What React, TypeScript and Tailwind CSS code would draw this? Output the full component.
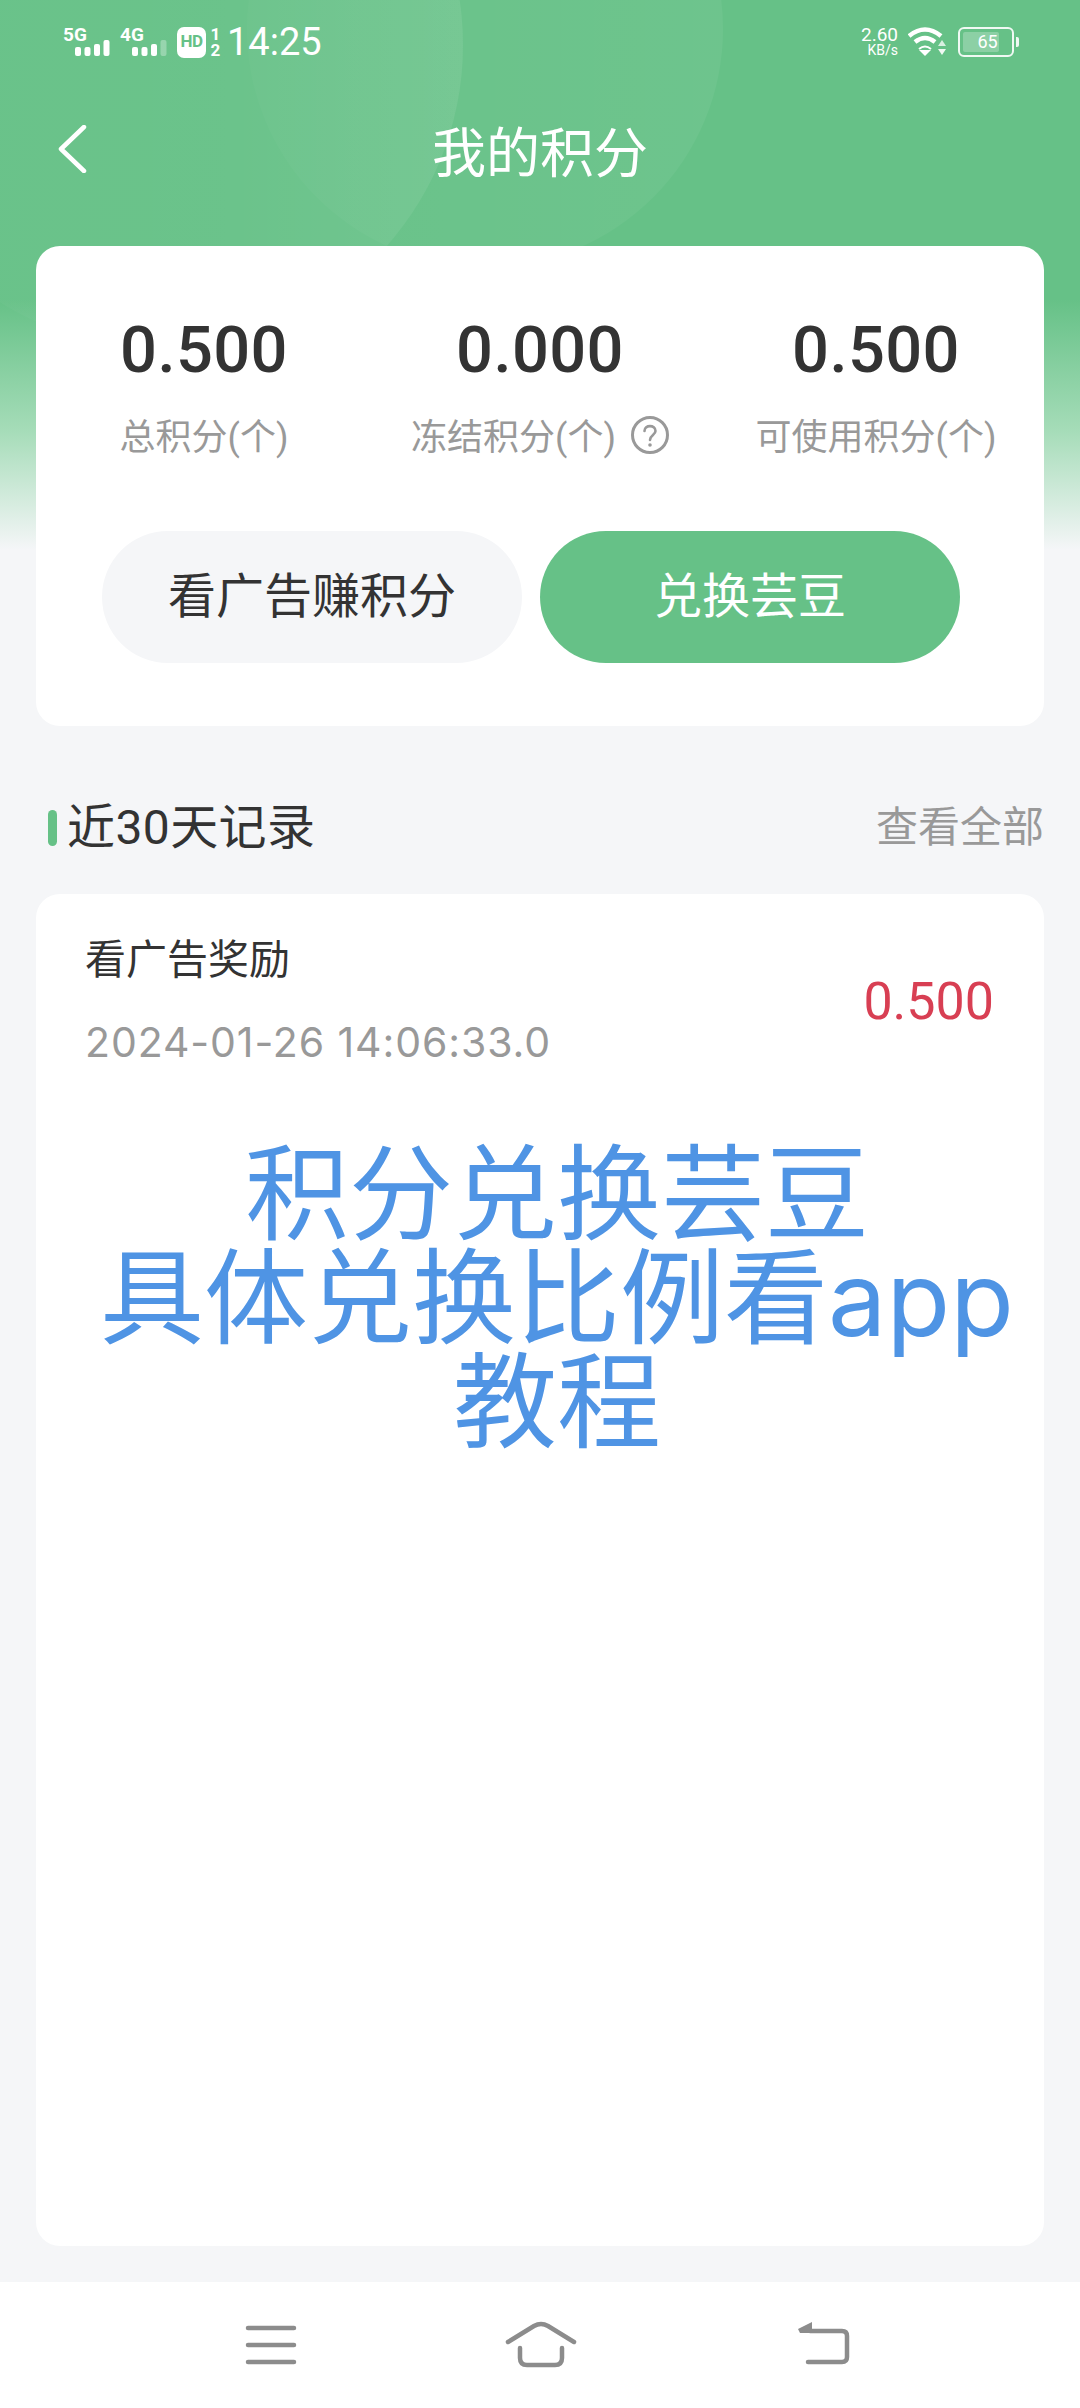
const CJK = "font-['Roboto','Noto_Sans_CJK_SC',sans-serif]";
const INTER = "font-['Inter','Noto_Sans_CJK_SC',sans-serif]";

function Bars({ faded }: { faded?: boolean }) {
  return (
    <svg width="36" height="17" viewBox="0 0 36 17" className="mt-[-2px]">
      <rect x="0" y="7" width="6" height="9" rx="2" fill="#fff" />
      <rect x="9.5" y="7" width="6" height="9" rx="2" fill="#fff" />
      <rect x="19" y="4" width="6" height="12" rx="2" fill="#fff" />
      <rect x="28.5" y="0" width="6" height="16" rx="2" fill="#fff" opacity={faded ? 0.3 : 1} />
    </svg>
  );
}

function Signal({ label, faded }: { label: string; faded?: boolean }) {
  return (
    <div className="flex flex-col w-[48px]">
      <span className="text-[19px] leading-[15px] font-bold text-white">{label}</span>
      <div className="ml-[12px]">
        <Bars faded={faded} />
      </div>
    </div>
  );
}

function StatusBar() {
  return (
    <div className="flex items-center justify-between h-[84px] pl-[63px] pr-[60px] text-white">
      <div className="flex items-center">
        <Signal label="5G" />
        <div className="w-[9px]" />
        <Signal label="4G" faded />
        <div className="ml-[9px] w-[29px] h-[31px] rounded-[7px] bg-white flex items-center justify-center text-[17px] font-bold text-[#66c187] tracking-[-0.5px]">
          HD
        </div>
        <div className="ml-[4px] flex flex-col items-center w-[11px] text-[17px] leading-[16px] font-bold">
          <span>1</span>
          <span>2</span>
        </div>
        <span className="ml-[6px] text-[38px] leading-[40px]">14:25</span>
      </div>
      <div className="flex items-center mr-[6px]">
        <div className="flex flex-col items-end mr-[10px] w-[40px]">
          <span className="text-[19px] leading-[16px]">2.60</span>
          <span className="text-[14px] leading-[14px]">KB/s</span>
        </div>
        <svg width="40" height="30" viewBox="0 0 40 30">
          <path d="M1 9 Q17 -4 33 9" fill="none" stroke="#fff" strokeWidth="4.5" />
          <path d="M7 15 Q17 7 27 15" fill="none" stroke="#fff" strokeWidth="4.5" />
          <path d="M11 23 L23 23 L17 29 Z" fill="#fff" />
          <path d="M11 22 Q17 17 23 22" fill="none" stroke="#fff" strokeWidth="2" />
          <path d="M30 19 L38 19 L34 13 Z" fill="#fff" opacity="0.75" />
          <path d="M30 22 L38 22 L34 28 Z" fill="#fff" opacity="0.9" />
        </svg>
        <div className="relative ml-[10px] w-[56px] h-[30px] rounded-[6px] border-[2.5px] border-white/90 p-[3px]">
          <div className="h-full w-[36px] rounded-[2px] bg-white/25" />
          <span className="absolute inset-0 flex items-center justify-center text-[18px] leading-none pl-[3px]">65</span>
          <span className="absolute right-[-7px] top-[8px] w-[3px] h-[10px] rounded-r-[2px] bg-white/90" />
        </div>
      </div>
    </div>
  );
}

function Stat({ value, label, help }: { value: string; label: string; help?: boolean }) {
  return (
    <div className="flex flex-col items-center flex-1">
      <span className="text-[65px] leading-[70px] font-medium text-[#333333] tracking-[0.4px]">{value}</span>
      <div className="mt-[31px] h-[44px] flex items-center whitespace-nowrap text-[36px] leading-[44px] text-[#999999]">
        {label}
        {help && (
          <svg width="38" height="38" viewBox="0 0 38 38" className="ml-[15px] mt-[-6px]">
            <circle cx="19" cy="19" r="17.5" fill="none" stroke="#999999" strokeWidth="3" />
            <path d="M13.5 15 C13.5 8.5 24.5 8.5 24.5 15 C24.5 19 19 19 19 24" fill="none" stroke="#999999" strokeWidth="2.6" strokeLinecap="round" />
            <circle cx="19" cy="29" r="1.8" fill="#999999" />
          </svg>
        )}
      </div>
    </div>
  );
}

export default function App() {
  return (
    <div className={`relative w-[1080px] h-[2408px] overflow-hidden flex flex-col bg-[#f5f6f8] ${CJK}`}>
      <div className="absolute left-0 right-0 top-0 h-[560px] overflow-hidden bg-[linear-gradient(to_bottom,#66c187_0px,#66c187_300px,#a5dcb8_430px,#f5f6f8_550px)]">
        <div className="absolute left-[-143px] top-[-258px] w-[606px] h-[606px] rounded-full bg-[linear-gradient(to_right,rgba(255,255,255,0.02),rgba(255,255,255,0.03)_60%,rgba(255,255,255,0.08))]" />
        <div className="absolute left-[247px] top-[-209px] w-[476px] h-[476px] rounded-full bg-[linear-gradient(to_left,rgba(255,255,255,0.05),rgba(255,255,255,0.02))]" />
      </div>

      <div className="relative flex flex-col flex-1">
        <StatusBar />

        <div className="relative h-[162px] flex items-center justify-center pb-[20px]">
          <svg width="30" height="48" viewBox="0 0 30 48" className="absolute left-[57px] top-[41px]">
            <path d="M27 2 L4 24 L27 46" fill="none" stroke="#fff" strokeWidth="4.5" strokeLinecap="round" strokeLinejoin="round" />
          </svg>
          <span className="text-[54px] leading-[60px] text-white">我的积分</span>
        </div>

        <div className="mx-[36px] h-[480px] rounded-[24px] bg-white flex flex-col">
          <div className="flex pt-[69px]">
            <Stat value="0.500" label="总积分(个)" />
            <Stat value="0.000" label="冻结积分(个)" help />
            <Stat value="0.500" label="可使用积分(个)" />
          </div>
          <div className="flex gap-[18px] pl-[66px] mt-[71px]">
            <button className="w-[420px] h-[132px] rounded-full bg-[#f5f6f8] text-[48px] leading-none text-[#333333]">看广告赚积分</button>
            <button className="w-[420px] h-[132px] rounded-full bg-[#66c187] text-[48px] leading-none text-white">兑换芸豆</button>
          </div>
        </div>

        <div className="flex items-center justify-between h-[168px] pt-[36px] pl-[48px] pr-[36px]">
          <div className="flex items-center">
            <span className="w-[9px] h-[36px] rounded-full bg-[#66c187]" />
            <span className="ml-[10px] text-[48px] leading-[56px] text-[#333333] tracking-[0.4px]">近30天记录</span>
          </div>
          <span className="text-[42px] leading-[50px] text-[#999999]">查看全部</span>
        </div>

        <div className="relative mx-[36px] h-[1352px] rounded-[24px] bg-white">
          <div className="flex items-center justify-between pl-[49px] pr-[50px] pt-[41px]">
            <div className="flex flex-col">
              <span className="text-[41px] leading-[50px] text-[#333333]">看广告奖励</span>
              <span className={`mt-[32px] text-[41px] leading-[50px] text-[#999999] tracking-[0.9px] ${INTER}`}>2024-01-26 14:06:33.0</span>
            </div>
            <span className="text-[52px] leading-[56px] text-[#d83f53] mt-[2px]">0.500</span>
          </div>
          <div className={`absolute left-[56px] top-[248px] w-[930px] text-center text-[104px] leading-[104px] text-[#4f94e4] ${INTER}`}>
            <div>积分兑换芸豆</div>
            <div>具体兑换比例看app</div>
            <div>教程</div>
          </div>
        </div>
      </div>

      <div className="relative h-[126px] bg-white flex items-start">
        <svg width="1080" height="126" viewBox="0 0 1080 126">
          <g fill="none" stroke="#8c8c8c" strokeWidth="4.5" strokeLinecap="round" strokeLinejoin="round">
            <path d="M248 46 H294 M248 63 H294 M248 80 H294" />
            <path d="M508 60 L534 44 Q541 40 548 44 L574 60" />
            <path d="M520 66 V76 Q520 83 527 83 H555 Q562 83 562 76 V66" />
            <path d="M810 49 H842 Q847 49 847 54 V75 Q847 80 842 80 H808" />
          </g>
          <path d="M798 47 L812 40 V51 H800 Z" fill="#8c8c8c" />
        </svg>
      </div>
    </div>
  );
}
